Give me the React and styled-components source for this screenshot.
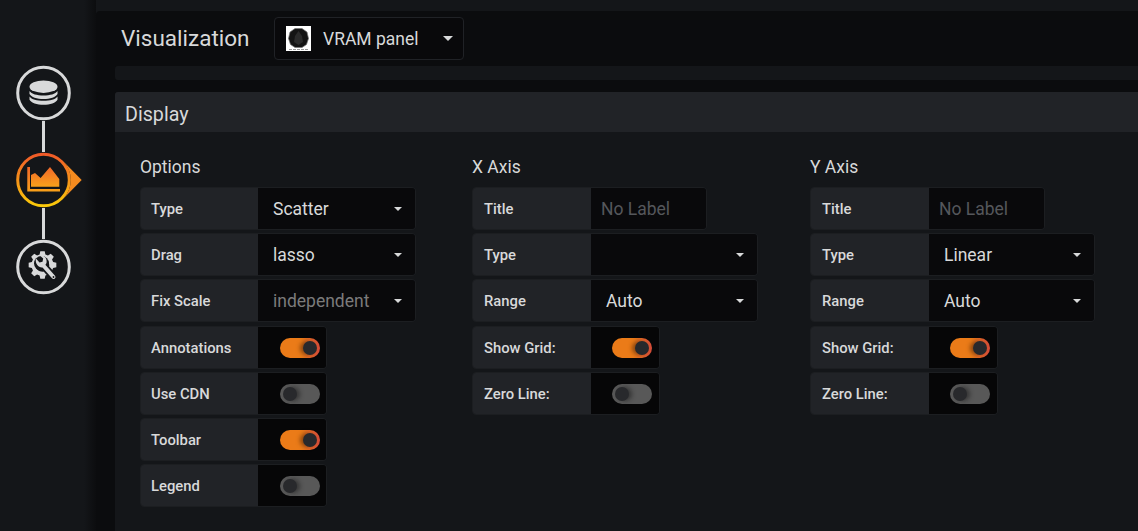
import React from 'react';
import styled, { createGlobalStyle } from 'styled-components';

const Global = createGlobalStyle`
  html, body {
    margin: 0;
    padding: 0;
    height: 531px;
    overflow: hidden;
    background: #141619;
    font-family: Roboto, "Liberation Sans", sans-serif;
  }
`;

const Page = styled.div`
  display: flex;
  width: 1138px;
  height: 531px;
  overflow: hidden;
  background: #141619;
`;

const Rail = styled.div`
  flex: 0 0 96px;
  display: flex;
  flex-direction: column;
  padding: 65px 0 0 16px;
  box-sizing: border-box;
  background: linear-gradient(90deg, #141619 0, #141619 84px, #0c0d0f 96px);
`;

const StepIcon = styled.svg`
  display: block;
  width: 66px;
  height: 56px;
  flex: none;
`;

const Connector = styled.div`
  width: 3px;
  height: 31px;
  margin-left: 26px;
  background: #d8d9da;
`;

const Main = styled.div`
  flex: 1;
  margin-top: 11px;
  min-width: 0;
  background: #0b0c0e;
  border-top-left-radius: 4px;
`;

const Header = styled.div`
  display: flex;
  align-items: flex-start;
  height: 55px;
  padding: 6px 0 0 25px;
  box-sizing: border-box;
`;

const Title = styled.div`
  width: 153px;
  font-size: 22.5px;
  color: #d8d9da;
  line-height: 42px;
`;

const Picker = styled.div`
  display: flex;
  align-items: center;
  width: 190px;
  height: 43px;
  padding: 0 10px 0 11px;
  box-sizing: border-box;
  border: 1px solid #202226;
  border-radius: 4px;
  background: #09090b;
  color: #d8d9da;
  font-size: 17.5px;
`;

const PickerLabel = styled.span`
  flex: 1;
  margin-left: 12px;
`;

const Caret = styled.span`
  width: 0;
  height: 0;
  flex: none;
  border-left: ${p => p.$size}px solid transparent;
  border-right: ${p => p.$size}px solid transparent;
  border-top: ${p => p.$size}px solid #d8d9da;
`;

const Strip = styled.div`
  height: 14px;
  margin: 0 0 12px 19px;
  background: #141619;
  border-top-left-radius: 3px;
  border-bottom-left-radius: 3px;
`;

const Section = styled.div`
  margin-left: 19px;
  height: 440px;
  background: #141619;
  border-top-left-radius: 3px;
`;

const SectionHead = styled.div`
  height: 40px;
  padding-left: 10px;
  background: #212327;
  color: #d8d9da;
  font-size: 19.7px;
  line-height: 45px;
  border-top-left-radius: 3px;
`;

const Columns = styled.div`
  display: flex;
  padding: 25px 0 0 25px;
`;

const Column = styled.div`
  width: ${p => p.$w}px;
  flex: none;
`;

const ColumnTitle = styled.div`
  height: 21px;
  margin-bottom: 9px;
  color: #d8d9da;
  font-size: 17.5px;
  line-height: 21px;
`;

const Rows = styled.div`
  display: flex;
  flex-direction: column;
  gap: 3px;
`;

const Row = styled.div`
  display: flex;
  width: ${p => p.$w}px;
  height: 43px;
  margin-top: ${p => (p.$push ? 1 : 0)}px;
  box-sizing: border-box;
  border: 1px solid #1c1e21;
  border-radius: 4px;
  overflow: hidden;
`;

const Label = styled.div`
  width: ${p => p.$w}px;
  flex: none;
  box-sizing: border-box;
  padding-left: ${p => p.$w - 107}px;
  background: #212327;
  color: #d8d9da;
  font-size: 14.8px;
  font-weight: 500;
  line-height: 42px;
`;

const Field = styled.div`
  flex: 1;
  display: flex;
  align-items: center;
  padding: 0 13px 0 15px;
  background: #09090b;
  color: ${p => (p.$dim ? '#7b7b7b' : '#d8d9da')};
  font-size: 17.5px;
`;

const FieldText = styled.span`
  flex: 1;
  margin-left: ${p => (p.$input ? -5 : 0)}px;
  color: ${p => (p.$input ? '#55575b' : 'inherit')};
`;

const SwitchCell = styled.div`
  flex: 1;
  display: flex;
  align-items: center;
  padding-left: ${p => p.$pad}px;
  background: #060607;
`;

const Track = styled.div`
  position: relative;
  width: 40px;
  height: 20px;
  border-radius: 10px;
  background: ${p => (p.$on ? 'linear-gradient(90deg, #eb7b18 0, #eb7b18 55%, #d44a3a 100%)' : '#585858')};
`;

const Knob = styled.div`
  position: absolute;
  top: 3px;
  left: ${p => (p.$on ? 23 : 3)}px;
  width: 14px;
  height: 14px;
  border-radius: 50%;
  background: #28292c;
  box-shadow: ${p => (p.$on ? '-3px 0 4px rgba(60,30,10,.55)' : '3px 0 4px rgba(20,20,20,.5)')};
`;

function SelectRow({ label, value, dim, w, lw = 117 }) {
  return (
    <Row $w={w}>
      <Label $w={lw}>{label}</Label>
      <Field $dim={dim}>
        <FieldText>{value}</FieldText>
        <Caret $size={4} />
      </Field>
    </Row>
  );
}

function InputRow({ label, placeholder }) {
  return (
    <Row $w={235}>
      <Label $w={118}>{label}</Label>
      <Field>
        <FieldText $input>{placeholder}</FieldText>
      </Field>
    </Row>
  );
}

function SwitchRow({ label, on, push, lw = 117 }) {
  return (
    <Row $w={lw === 117 ? 187 : 188} $push={push}>
      <Label $w={lw}>{label}</Label>
      <SwitchCell $pad={lw === 117 ? 22 : 21}>
        <Track $on={on}>
          <Knob $on={on} />
        </Track>
      </SwitchCell>
    </Row>
  );
}

const DatabaseStep = () => (
  <StepIcon viewBox="0 0 66 56">
    <circle cx="27.5" cy="28" r="25.8" fill="none" stroke="#d8d9da" strokeWidth="3" />
    <ellipse cx="27.5" cy="21.700" rx="14" ry="6.200" fill="#d8d9da" />
    <path d="M13.500 26C15.500 29 21 30.500 27.500 30.500S39.500 29 41.500 26V29C40 32 34 34 27.500 34S15 32 13.500 29Z" fill="#d8d9da" />
    <path d="M13.500 31.500C15.500 34.500 21 35.800 27.500 35.800S39.500 34.500 41.500 31.500V34.800C40 37.800 34 39.800 27.500 39.800S15 37.800 13.500 34.800Z" fill="#d8d9da" />
  </StepIcon>
);

const ChartStep = () => (
  <StepIcon viewBox="0 0 66 56">
    <defs>
      <linearGradient id="ring" x1="0" y1="0" x2="0" y2="1">
        <stop offset="0" stopColor="#f05a28" />
        <stop offset="1" stopColor="#fbca0a" />
      </linearGradient>
      <linearGradient id="fill" x1="0" y1="0" x2="0" y2="1">
        <stop offset="0" stopColor="#f0672a" />
        <stop offset="1" stopColor="#f9a11a" />
      </linearGradient>
    </defs>
    <circle cx="27.500" cy="28" r="25.800" fill="#141619" stroke="url(#ring)" strokeWidth="3" />
    <path d="M47 8.900L65.700 28 47 47.100A27.300 27.300 0 0 0 47 8.900z" fill="#f58b1f" />
    <path d="M11.300 15H14V39H11.300zM11.300 37H44V39.500H11.300z" fill="url(#fill)" />
    <path d="M15 34.700V23L19 21L24.600 26L34 15L43.300 27V34.700z" fill="url(#fill)" />
  </StepIcon>
);

function gearPath(cx, cy, outer, root, teeth) {
  const step = (Math.PI * 2) / teeth;
  const pts = [];
  for (let i = 0; i < teeth; i++) {
    const a = i * step - Math.PI / 2;
    const at = (r, o) => `${(cx + r * Math.cos(a + o)).toFixed(2)} ${(cy + r * Math.sin(a + o)).toFixed(2)}`;
    pts.push(at(root, -step * 0.34), at(outer, -step * 0.2), at(outer, step * 0.2), at(root, step * 0.34));
  }
  return `M${pts.join('L')}Z`;
}

const GearStep = () => (
  <StepIcon viewBox="0 0 66 56">
    <circle cx="27.500" cy="28" r="25.800" fill="none" stroke="#d8d9da" strokeWidth="3" />
    <path d={gearPath(26.500, 26, 14, 11, 8)} fill="#d8d9da" />
    <circle cx="26.500" cy="26" r="6.800" fill="#141619" />
    <path d="M26.500 25.500L37.500 38" stroke="#141619" strokeWidth="7.500" strokeLinecap="round" />
    <circle cx="25.500" cy="24.500" r="7.500" fill="#141619" />
    <path d="M26.500 25.500L37.500 38" stroke="#d8d9da" strokeWidth="4" strokeLinecap="round" />
    <path d="M20 19.500L23.500 23.500L26.500 22.700L27.200 19.500L23.800 16.500C28 15.800 31.500 19 30.500 24L28 28C24 30 18.500 25.500 20 19.500z" fill="#d8d9da" />
    <circle cx="37.500" cy="38" r="0.900" fill="#141619" />
  </StepIcon>
);

const PluginLogo = () => (
  <svg width="25" height="25" viewBox="0 0 25 25" style={{ flex: 'none' }}>
    <rect width="25" height="25" fill="#fff" />
    <path d="M9 2.500h7l5 3.500 1.500 6.500-2 6L16 21.500H9L4.500 18.500l-2-6L4 6z" fill="#141414" stroke="#777" strokeWidth=".7" />
    <path d="M12.500 5l3.500 5 1 6-4.500 3-4.500-3 1-6z" fill="#2b2b2b" />
    <path d="M3 23.500h19" stroke="#999" strokeWidth="1" strokeDasharray="3 1" />
  </svg>
);

export default function App() {
  return (
    <Page>
      <Global />
      <Rail>
        <DatabaseStep />
        <Connector />
        <ChartStep />
        <Connector />
        <GearStep />
      </Rail>
      <Main>
        <Header>
          <Title>Visualization</Title>
          <Picker>
            <PluginLogo />
            <PickerLabel>VRAM panel</PickerLabel>
            <Caret $size={5} />
          </Picker>
        </Header>
        <Strip />
        <Section>
          <SectionHead>Display</SectionHead>
          <Columns>
            <Column $w={332}>
              <ColumnTitle>Options</ColumnTitle>
              <Rows>
                <SelectRow w={276} label="Type" value="Scatter" />
                <SelectRow w={276} label="Drag" value="lasso" />
                <SelectRow w={276} label="Fix Scale" value="independent" dim />
                <SwitchRow push label="Annotations" on />
                <SwitchRow label="Use CDN" />
                <SwitchRow label="Toolbar" on />
                <SwitchRow label="Legend" />
              </Rows>
            </Column>
            <Column $w={338}>
              <ColumnTitle>X Axis</ColumnTitle>
              <Rows>
                <InputRow label="Title" placeholder="No Label" />
                <SelectRow w={286} lw={118} label="Type" value="" />
                <SelectRow w={286} lw={118} label="Range" value="Auto" />
                <SwitchRow push lw={118} label="Show Grid:" on />
                <SwitchRow lw={118} label="Zero Line:" />
              </Rows>
            </Column>
            <Column $w={300}>
              <ColumnTitle>Y Axis</ColumnTitle>
              <Rows>
                <InputRow label="Title" placeholder="No Label" />
                <SelectRow w={285} lw={118} label="Type" value="Linear" />
                <SelectRow w={285} lw={118} label="Range" value="Auto" />
                <SwitchRow push lw={118} label="Show Grid:" on />
                <SwitchRow lw={118} label="Zero Line:" />
              </Rows>
            </Column>
          </Columns>
        </Section>
      </Main>
    </Page>
  );
}
